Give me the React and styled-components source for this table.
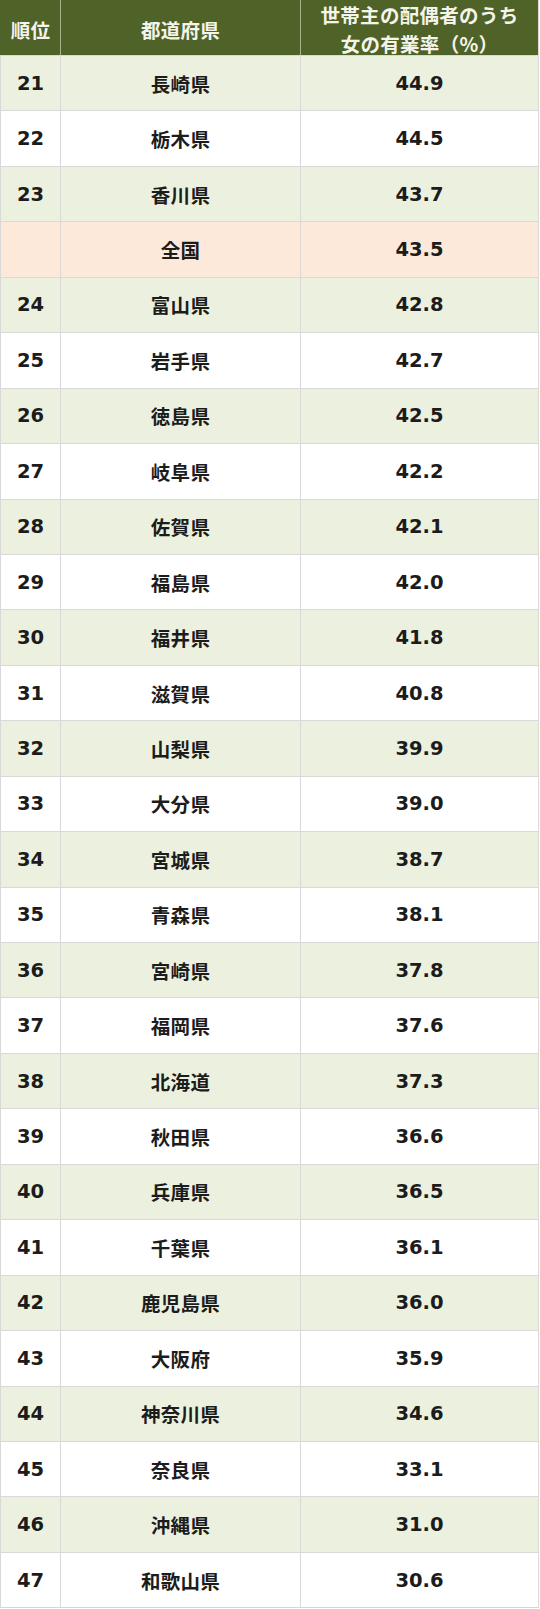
import React from 'react';
import styled, { createGlobalStyle } from 'styled-components';

const GlobalStyle = createGlobalStyle`
  html, body {
    margin: 0;
    padding: 0;
    background: #ffffff;
  }
`;

const rows = [
  ['21', '長崎県', '44.9'],
  ['22', '栃木県', '44.5'],
  ['23', '香川県', '43.7'],
  ['', '全国', '43.5'],
  ['24', '富山県', '42.8'],
  ['25', '岩手県', '42.7'],
  ['26', '徳島県', '42.5'],
  ['27', '岐阜県', '42.2'],
  ['28', '佐賀県', '42.1'],
  ['29', '福島県', '42.0'],
  ['30', '福井県', '41.8'],
  ['31', '滋賀県', '40.8'],
  ['32', '山梨県', '39.9'],
  ['33', '大分県', '39.0'],
  ['34', '宮城県', '38.7'],
  ['35', '青森県', '38.1'],
  ['36', '宮崎県', '37.8'],
  ['37', '福岡県', '37.6'],
  ['38', '北海道', '37.3'],
  ['39', '秋田県', '36.6'],
  ['40', '兵庫県', '36.5'],
  ['41', '千葉県', '36.1'],
  ['42', '鹿児島県', '36.0'],
  ['43', '大阪府', '35.9'],
  ['44', '神奈川県', '34.6'],
  ['45', '奈良県', '33.1'],
  ['46', '沖縄県', '31.0'],
  ['47', '和歌山県', '30.6'],
];

const Table = styled.div`
  width: 539px;
  display: flex;
  flex-direction: column;
  font-family: 'DejaVu Sans', 'Noto Sans CJK JP', sans-serif;
  font-weight: bold;
  border-bottom: 1px solid #d6d6d6;
`;

const Row = styled.div`
  display: grid;
  grid-template-columns: 60px 240px 1fr;
  height: ${(p) => (p.$head ? '55px' : '55.45px')};
  box-sizing: border-box;
  background: ${(p) =>
    p.$head ? '#4f6228' : p.$total ? '#fde9d9' : p.$shade ? '#ebf1de' : '#ffffff'};
  color: ${(p) => (p.$head ? '#f4f4ea' : '#1c1c1c')};
  border-top: ${(p) => (p.$head ? 'none' : '1px solid #d9d9d9')};
`;

const Cell = styled.div`
  display: flex;
  align-items: center;
  justify-content: center;
  text-align: center;
  line-height: 29px;
  border-left: 1px solid ${(p) => (p.$head ? '#a9b48f' : '#d9d9d9')};
  border-right: ${(p) => (p.$last ? '1px solid #d9d9d9' : 'none')};
  &:first-child {
    border-left: 1px solid ${(p) => (p.$head ? '#4f6228' : '#d9d9d9')};
  }
`;

const Jp = styled.span`
  font-family: 'Noto Sans CJK JP', sans-serif;
  font-weight: bold;
  font-size: 19.5px;
  letter-spacing: 0.3px;
`;

const Num = styled.span`
  font-family: 'DejaVu Sans', sans-serif;
  font-weight: bold;
  font-size: 19.5px;
`;

export default function App() {
  return (
    <>
      <GlobalStyle />
      <Table>
        <Row $head>
          <Cell $head><Jp>順位</Jp></Cell>
          <Cell $head><Jp>都道府県</Jp></Cell>
          <Cell $head $last>
            <Jp>
              世帯主の配偶者のうち
              <br />
              女の有業率（%）
            </Jp>
          </Cell>
        </Row>
        {rows.map((r, i) => (
          <Row key={r[1]} $shade={i % 2 === 0} $total={r[1] === '全国'}>
            <Cell><Num>{r[0]}</Num></Cell>
            <Cell><Jp>{r[1]}</Jp></Cell>
            <Cell $last><Num>{r[2]}</Num></Cell>
          </Row>
        ))}
      </Table>
    </>
  );
}
